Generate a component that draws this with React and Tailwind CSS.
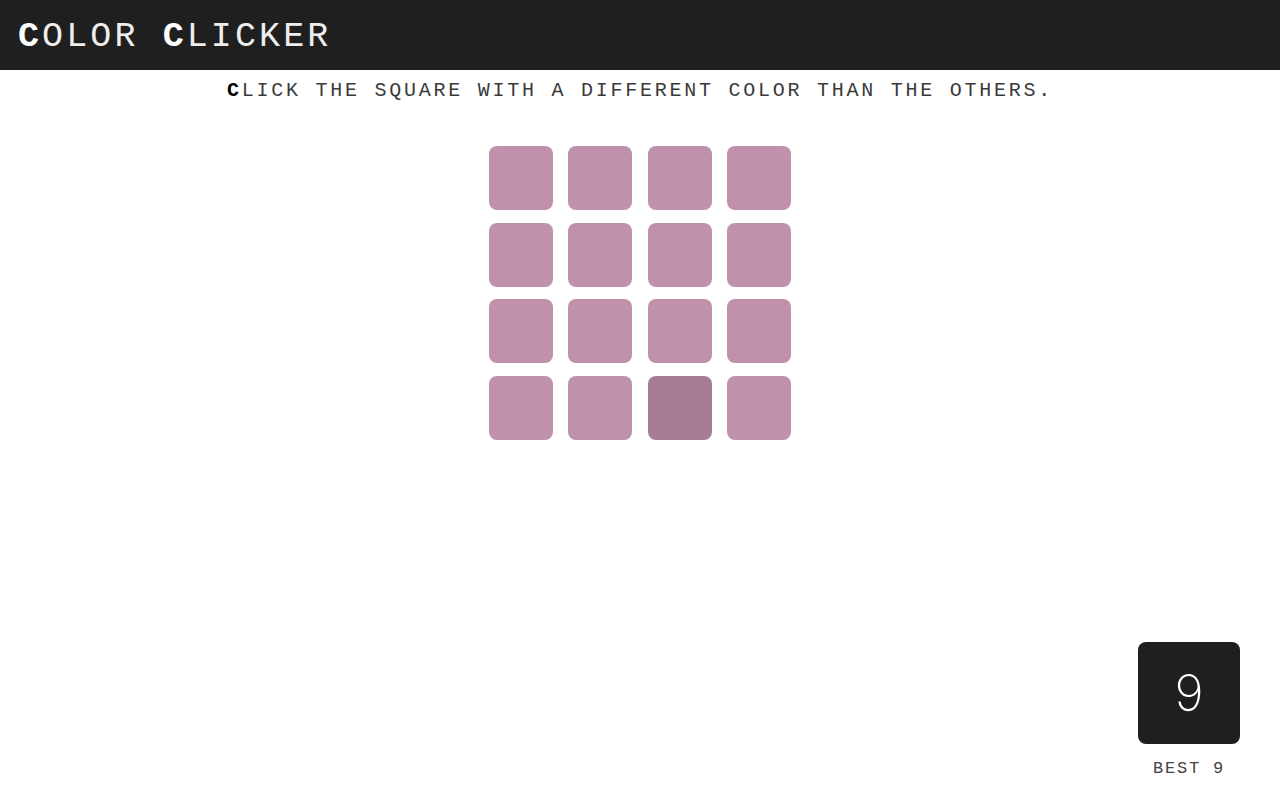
import { useState } from 'react';

const MONO = { fontFamily: '"Liberation Mono", "DejaVu Sans Mono", monospace' };

function App() {
  const [odd] = useState(14);
  const squares = Array.from({ length: 16 }, (_, i) => i);

  return (
    <div className="flex flex-col h-screen bg-white" style={MONO}>
      {/* Header */}
      <header className="h-[70px] bg-[#1f1f1f] flex items-center px-[18px] pt-[4px] shrink-0">
        <h1 className="text-[#eeeeee] text-[35px] tracking-[3.1px] leading-none font-normal">
          <span className="font-bold text-white">C</span>OLOR <span className="font-bold text-white">C</span>LICKER
        </h1>
      </header>

      {/* Instructions */}
      <p className="text-center text-[20px] tracking-[2.75px] text-[#3a3a3a] mt-[11px] leading-[20px]">
        <span className="font-bold text-black">C</span>LICK THE SQUARE WITH A DIFFERENT COLOR THAN THE OTHERS.
      </p>

      {/* Board */}
      <div className="mx-auto mt-[45px] w-[302px] h-[294px] grid grid-cols-[64px_64px_64px_64px] grid-rows-[64px_64px_64px_64px] justify-between content-between">
        {squares.map((i) => (
          <button
            key={i}
            className={`w-16 h-16 rounded-[8px] ${i === odd ? 'bg-[#a87c93]' : 'bg-[#bf91aa]'}`}
          />
        ))}
      </div>

      <div className="flex-1" />

      {/* Score */}
      <div className="flex justify-end pr-[40px] pb-[23px]">
        <div className="flex flex-col items-center">
          <div className="w-[102px] h-[102px] rounded-[8px] bg-[#1f1f1f] flex items-center justify-center">
            <span className="text-white text-[50px] font-extralight leading-none" style={{ fontFamily: 'Inter, Lato, sans-serif' }}>
              9
            </span>
          </div>
          <p className="mt-[16px] text-[17px] tracking-[1.8px] text-[#444] leading-[17px]">BEST 9</p>
        </div>
      </div>
    </div>
  );
}

export default App;
